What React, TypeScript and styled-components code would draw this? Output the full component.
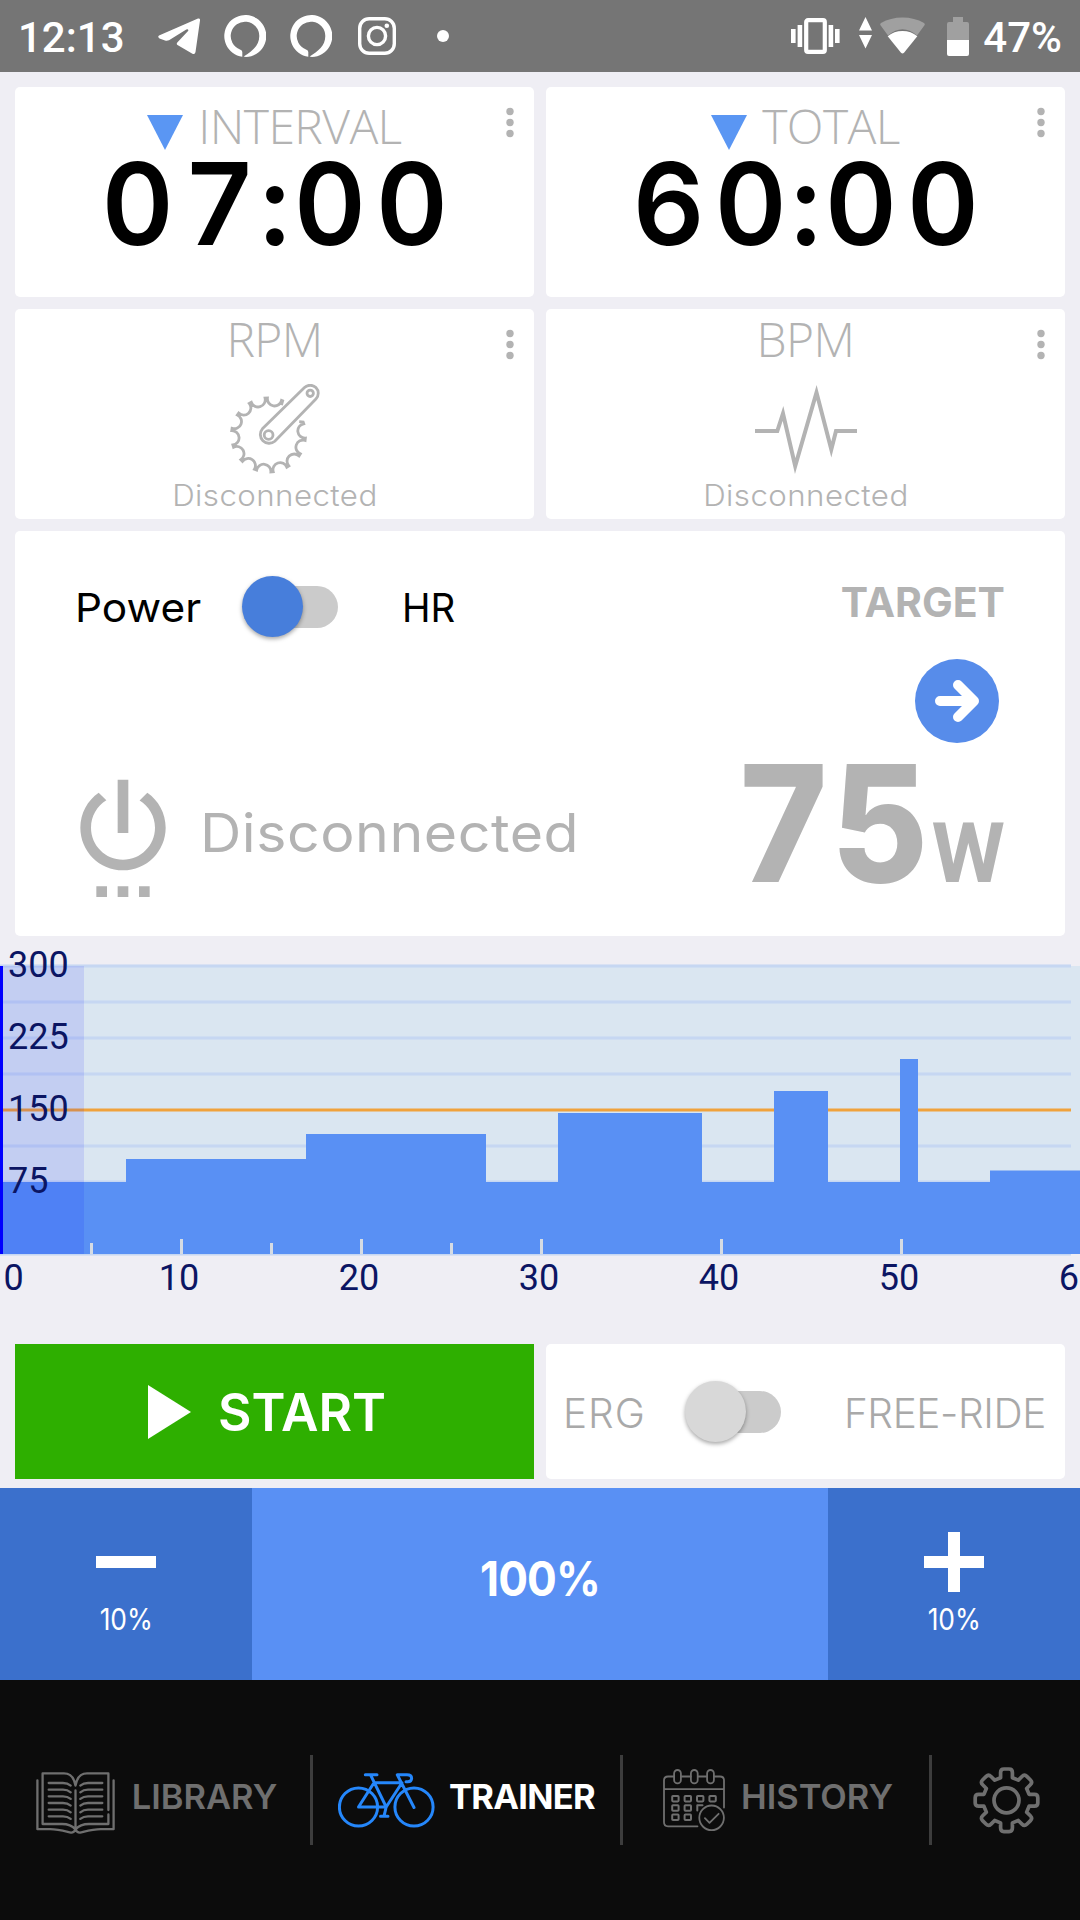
import React from 'react';
import styled, { createGlobalStyle } from 'styled-components';

const c = {
  page: '#efeef4',
  muted: '#b3b3b3',
  blue: '#5990f4',
  deepBlue: '#3b70cc',
  green: '#2eaf00',
  navBg: '#0c0c0c',
  navMuted: '#6f6f6f',
  navActive: '#2587fb',
  axis: '#0b1563',
};

const GlobalStyle = createGlobalStyle`
  * { box-sizing: border-box; }
  body {
    margin: 0;
    background: ${c.navBg};
    font-family: Inter, "Liberation Sans", sans-serif;
  }
  button { font: inherit; border: 0; padding: 0; margin: 0; }
  svg { display: block; flex: none; }
`;

const Screen = styled.div`
  width: 1080px;
  height: 1920px;
  overflow: hidden;
  display: flex;
  flex-direction: column;
  background: ${c.page};
`;

/* ---------- Status bar ---------- */

const StatusBar = styled.header`
  height: 72px;
  display: flex;
  align-items: center;
  padding: 0 18px 0 18px;
  background: #757575;
  color: #fff;
  font: 500 42px/69px Roboto, sans-serif;
`;

const Clock = styled.span`
  width: 140px;
  padding-top: 3px;
`;

const Notifications = styled.div`
  flex: 1;
  display: flex;
  align-items: center;
  gap: 24px;
`;

const MoreDot = styled.span`
  width: 12px;
  height: 12px;
  margin-left: 17px;
  border-radius: 50%;
  background: #fff;
`;

const SystemIcons = styled.div`
  display: flex;
  align-items: center;
`;

const BatteryText = styled.span`
  padding-top: 3px;
  margin-left: 14px;
`;

/* ---------- Metric cards ---------- */

const CardGrid = styled.section`
  display: grid;
  grid-template-columns: 1fr 1fr;
  grid-auto-rows: 210px;
  gap: 12px;
  padding: 15px 15px 12px;
`;

const Card = styled.article`
  position: relative;
  display: flex;
  flex-direction: column;
  align-items: center;
  border-radius: 5px;
  background: #fff;
  color: ${c.muted};
`;

const CardHeader = styled.div<{ $height: number }>`
  display: flex;
  align-items: center;
  gap: 15px;
  height: ${(p) => p.$height}px;
`;

const CardTitle = styled.h2`
  margin: 0;
  padding-top: 1px;
  font: 350 48px/56px "Open Sans", sans-serif;
  letter-spacing: -0.6px;
`;

const Countdown = styled.svg`
  margin-top: 15px;
`;

const MenuButton = styled.button`
  position: absolute;
  top: 20px;
  right: 20px;
  background: none;
`;

const Time = styled.div`
  padding-left: 11px;
  color: #000;
  font-size: 114px;
  font-weight: 630;
  line-height: 82px;
  letter-spacing: 10px;
  font-variant-numeric: tabular-nums;
  white-space: nowrap;
  transform: scaleX(0.98);
`;

const Colon = styled.span`
  margin-left: -6px;
  letter-spacing: 4px;
`;

const SensorIcon = styled.div`
  height: 90px;
  margin-top: 17px;
`;

const SensorStatus = styled.p`
  margin: 0;
  font-size: 29.5px;
  font-weight: 300;
  line-height: 43px;
  letter-spacing: 0.4px;
  transform: scaleX(1.06);
`;

/* ---------- Power panel ---------- */

const PowerPanel = styled.section`
  display: flex;
  justify-content: space-between;
  height: 405px;
  margin: 0 15px;
  border-radius: 5px;
  background: #fff;
  color: ${c.muted};
`;

const PowerColumn = styled.div`
  padding: 45px 0 0 44px;
`;

const ModeRow = styled.div`
  display: flex;
  align-items: center;
  height: 61px;
  padding-left: 16px;
`;

const ModeLabel = styled.span<{ $width: number; $stretch: number }>`
  width: ${(p) => p.$width}px;
  padding-top: 3px;
  color: #000;
  font-size: 40px;
  line-height: 58px;
  transform: scaleX(${(p) => p.$stretch});
  transform-origin: left;
`;

const Track = styled.button<{ $before: number; $after: number }>`
  flex: none;
  width: 86px;
  height: 42px;
  display: flex;
  align-items: center;
  margin: 0 ${(p) => p.$after}px 0 ${(p) => p.$before + 10}px;
  border-radius: 21px;
  background: #cbcbcb;
`;

const Thumb = styled.span<{ $color: string }>`
  flex: none;
  width: 61px;
  height: 61px;
  margin-left: -10px;
  border-radius: 50%;
  background: ${(p) => p.$color};
  box-shadow: 0 2px 4px rgba(0, 0, 0, 0.35);
`;

const ConnectionRow = styled.div`
  display: flex;
  align-items: center;
  gap: 13px;
  margin-top: 132px;
`;

const ConnectionText = styled.span`
  margin-top: -1px;
  font-size: 53px;
  font-weight: 370;
  line-height: 64px;
  letter-spacing: 0.5px;
  transform: scaleX(1.08);
  transform-origin: left;
`;

const TargetColumn = styled.div`
  display: flex;
  flex-direction: column;
  align-items: flex-end;
  padding: 41px 60px 0 0;
`;

const TargetTitle = styled.h2`
  margin: 0;
  font-size: 41px;
  font-weight: 700;
  line-height: 60px;
`;

const NextButton = styled.button`
  width: 84px;
  height: 84px;
  margin: 27px 6px 21px 0;
  border-radius: 50%;
  background: #578cea;
`;

const TargetValue = styled.div`
  display: flex;
  align-items: baseline;
  height: 118px;
`;

const Watts = styled.span`
  margin-right: -2px;
  font-size: 162px;
  font-weight: 850;
  line-height: 118px;
  letter-spacing: 5.5px;
  transform: scaleX(0.92);
  transform-origin: right;
`;

const Unit = styled.span`
  font: 700 84px/60px Roboto, sans-serif;
`;

/* ---------- Workout chart ---------- */

const ChartArea = styled.section`
  height: 408px;
`;

const AxisText = styled.text`
  fill: ${c.axis};
  font: 400 36px Roboto, sans-serif;
`;

/* ---------- Controls ---------- */

const Controls = styled.section`
  display: grid;
  grid-template-columns: 1fr 1fr;
  gap: 12px;
  height: 135px;
  margin: 0 15px 9px;
`;

const StartButton = styled.button`
  display: flex;
  align-items: center;
  justify-content: center;
  gap: 27px;
  padding-right: 15px;
  background: ${c.green};
  color: #fff;
  font-size: 51.5px;
  font-weight: 640;
`;

const StartLabel = styled.span`
  padding-top: 1px;
`;

const RideMode = styled.div`
  display: flex;
  align-items: center;
  padding-left: 17px;
  border-radius: 5px;
  background: #fff;
`;

const RideLabel = styled.span<{ $spacing: number }>`
  padding-top: 4px;
  color: #a9a9a9;
  font-size: 40.5px;
  font-weight: 350;
  letter-spacing: ${(p) => p.$spacing}px;
  white-space: nowrap;
`;

/* ---------- Intensity bar ---------- */

const IntensityBar = styled.section`
  display: grid;
  grid-template-columns: 252px 1fr 252px;
  height: 192px;
  background: ${c.blue};
  color: #fff;
`;

const StepButton = styled.button`
  display: flex;
  flex-direction: column;
  align-items: center;
  padding-top: 44px;
  background: ${c.deepBlue};
  color: #fff;
  font-size: 30px;
  line-height: 54px;
`;

const StepLabel = styled.span`
  transform: scaleX(0.88);
`;

const Intensity = styled.div`
  display: flex;
  align-items: center;
  justify-content: center;
  padding-bottom: 11px;
  font-size: 48px;
  font-weight: 650;
  letter-spacing: -1px;
  transform: scaleX(0.92);
`;

/* ---------- Bottom navigation ---------- */

const NavBar = styled.nav`
  display: grid;
  grid-template-columns: 310px 3px 307px 3px 306px 3px 1fr;
  height: 240px;
  padding-top: 75px;
  background: ${c.navBg};
`;

const NavItem = styled.a<{ $active?: boolean; $gap?: number; $shift?: number }>`
  display: flex;
  align-items: center;
  justify-content: center;
  gap: ${(p) => p.$gap ?? 0}px;
  height: 90px;
  padding-left: ${(p) => p.$shift ?? 0}px;
  color: ${(p) => (p.$active ? '#fff' : c.navMuted)};
  font-size: 34.5px;
  font-weight: ${(p) => (p.$active ? 650 : 600)};
`;

const NavLabel = styled.span<{ $spacing?: number }>`
  margin-top: -7px;
  letter-spacing: ${(p) => p.$spacing ?? 0}px;
`;

const NavDivider = styled.span`
  height: 90px;
  background: #3d3d3d;
`;

/* ---------- Icons ---------- */

const TelegramIcon = () => (
  <svg width="42" height="37" viewBox="0 0 42 37" fill="#fff">
    <path d="M1 17.5 40 .6Q42.3 0 42 2.5L37.5 34Q37 37 34 35.5L19.5 27Q18 26 19.5 24.3L30.3 12.7Q30.5 10.8 28.3 11.5L11 22.3Q9 23 7 22.5L1.5 20.5Q-.8 19 1 17.5Z" />
  </svg>
);

const AssistantIcon = () => (
  <svg width="42" height="42" viewBox="0 0 42 42" fill="#fff">
    <path d="M18.3 41.8A21 21 0 1 1 22 42L19.6 41.6C28 36 35.3 31 35.3 21A14.3 14.3 0 1 0 16 34.4Q18.3 35 18.3 37Z" />
  </svg>
);

const InstagramMark = styled.svg`
  margin-left: 2px;
`;

const InstagramIcon = () => (
  <InstagramMark width="38" height="38" viewBox="0 0 38 38" fill="none" stroke="#fff" strokeWidth="3.4">
    <rect x="1.7" y="1.7" width="34.6" height="34.6" rx="9.5" />
    <circle cx="19" cy="19" r="8.6" />
    <circle cx="28.8" cy="8.8" r="2.3" fill="#fff" stroke="none" />
  </InstagramMark>
);

const VibrateIcon = () => (
  <svg width="49" height="36" viewBox="0 0 49 36" fill="#fff">
    <rect x="15.2" y="2.2" width="18.6" height="31.6" rx="1.8" fill="none" stroke="#fff" strokeWidth="4.2" />
    <path d="M0 11h4.6v14H0zM6.6 7h4.6v22H6.6zM37.6 7h4.6v22h-4.6zM44 11h4.6v14H44z" />
  </svg>
);

const TransferIcon = styled.svg`
  margin: -7px 8px 0 19px;
`;

const BatteryIcon = styled.svg`
  margin-left: 22px;
`;

const StatusIcons = () => (
  <SystemIcons>
    <VibrateIcon />
    <TransferIcon width="13" height="32" viewBox="0 0 13 32" fill="#fff">
      <path d="M6.5 0 13 13.5H0zM0 18h13L6.5 31.5z" />
    </TransferIcon>
    <svg width="45" height="38" viewBox="0 0 45 38">
      <path d="M.5 8.3Q-.3 7 1 6Q10.5 .5 22.5 .5T44 6Q45.3 7 44.5 8.3L37 18.5Q22.5 6 8 18.5Z" fill="#a0a0a0" />
      <path d="M7.7 19.2Q14 14 22.5 14T37.3 19.2L24 35.7Q22.5 37.3 21 35.7Z" fill="#fff" />
    </svg>
    <BatteryIcon width="22" height="39" viewBox="0 0 22 39">
      <path d="M6 0h10v5h4q2 0 2 2v16H0V7q0-2 2-2h4z" fill="#a0a0a0" />
      <path d="M0 23h22v14q0 2-2 2H2q-2 0-2-2z" fill="#fff" />
    </BatteryIcon>
  </SystemIcons>
);

const MenuDots = () => (
  <svg width="8" height="31" viewBox="0 0 8 31" fill={c.muted}>
    {[4.5, 15.5, 26.5].map((y) => (
      <circle key={y} cx="4" cy={y} r="3.7" />
    ))}
  </svg>
);

const polar = (r: number, deg: number) => {
  const a = (deg * Math.PI) / 180;
  return `${(38.5 + r * Math.cos(a)).toFixed(2)} ${(51 + r * Math.sin(a)).toFixed(2)}`;
};

const ringTeeth = Array.from({ length: 13 }, (_, k) => -19.5 + k * 26);
const ringPath = ringTeeth
  .map((deg, i) =>
    i === 0
      ? `M${polar(33.5, deg - 4)}L${polar(37, deg - 1)}L${polar(37, deg + 1.8)}`
      : `A7.2 7.2 0 0 0 ${polar(37, deg - 1.8)}L${i === 12 ? `${polar(37, deg)}L${polar(32.5, deg + 1)}` : polar(37, deg + 1.8)}`,
  )
  .join('');

const CrankIcon = () => (
  <svg width="90" height="90" viewBox="0 0 90 90" fill="none" stroke={c.muted} strokeWidth="2.8">
    <path d={ringPath} />
    <path d="M32.4 44.8 74.5 3.6A8 8 0 0 1 85.9 15L44.8 57.2A8.8 8.8 0 0 1 32.4 44.8Z" fill="#fff" />
    <circle cx="38.6" cy="51" r="4.4" />
    <circle cx="80.2" cy="9.3" r="3.2" />
  </svg>
);

const PulseIcon = () => (
  <svg width="102" height="90" viewBox="0 0 102 90" fill="none" stroke={c.muted} strokeWidth="4" strokeMiterlimit="20">
    <path d="M0 47H22.3L28 29.5 40.2 82 61.5 8.5 76.3 65.5 81 47H102" />
  </svg>
);

const PowerIcon = () => (
  <svg width="128" height="128" viewBox="0 0 24 24" fill={c.muted}>
    <path d="M7 24h2v-2H7v2zm4 0h2v-2h-2v2zm2-22h-2v10h2V2zm3.56 2.44l-1.45 1.45C16.84 6.94 18 8.83 18 11c0 3.31-2.69 6-6 6s-6-2.69-6-6c0-2.17 1.16-4.06 2.88-5.12L7.44 4.44C5.36 5.88 4 8.28 4 11c0 4.42 3.58 8 8 8s8-3.58 8-8c0-2.72-1.36-5.12-3.44-6.56zM15 24h2v-2h-2v2z" />
  </svg>
);

const lineRows = [11, 17.7, 24.3, 31, 37.7, 44.3];

const BookSvg = styled.svg`
  margin-top: 5px;
`;

const LibraryIcon = () => (
  <BookSvg width="79" height="62" viewBox="0 0 79 62" fill="none" stroke={c.navMuted} strokeWidth="2.3" strokeLinecap="round" strokeLinejoin="round">
    <path d="M1.4 8.3V57.2H14C23 57.2 30 59.5 35 60.6Q38 60.8 39.5 57.5Q41 60.8 44 60.6C49 59.5 56 57.2 65 57.2H77.6V8.3" />
    <path d="M39.5 13.5C38 5 34 1.4 28 1.4H6.6V52H26C33 52 36.5 54 39.5 57.5C42.5 54 46 52 53 52H72.4V42.5M39.5 13.5C41 5 45 1.4 51 1.4H72.4V38M39.5 18.5V57" />
    {lineRows.map((y) => (
      <path key={y} d={`M12.7 ${y}H27Q31.5 ${y} 34.7 ${y + 2.6}M66.3 ${y}H52Q47.5 ${y} 44.3 ${y + 2.6}`} />
    ))}
  </BookSvg>
);

const BikeIcon = () => (
  <svg width="97" height="55" viewBox="0 0 97 55" fill="none" stroke={c.navActive} strokeWidth="3" strokeLinecap="round" strokeLinejoin="round">
    <circle cx="20.5" cy="34" r="19.1" />
    <circle cx="76" cy="34" r="19.1" />
    <path d="M27.3 1.8H39M32.6 2L48.2 34H20.5L36 9.7H64L48.2 34L46 43.2M42.5 43.2H50M76 34.5L59.3 1.8H69Q73.6 1.8 73.6 5.3T69.8 8.8H68" />
  </svg>
);

const dayCells = [
  [12.4, 29.7], [24.8, 29.7], [37.2, 29.7], [49.6, 29.7],
  [12.4, 39], [24.8, 39], [12.4, 48.3], [24.8, 48.3],
];

const CalendarSvg = styled.svg`
  margin-top: 2px;
`;

const CalendarIcon = () => (
  <CalendarSvg width="62" height="64" viewBox="0 0 62 64" fill="none" stroke={c.navMuted} strokeWidth="1.8" strokeLinecap="round" strokeLinejoin="round">
    <path d="M11 7.5H5Q1 7.5 1 11.5V53.3Q1 57.3 5 57.3H34.5M18 7.5H27.8M34.8 7.5H44M51 7.5H57Q61 7.5 61 11.5V38.5M1 20.2H61" />
    {[14.5, 31.3, 47.5].map((x) => (
      <rect key={x} x={x - 3.4} y="1" width="6.8" height="13.3" rx="3.4" />
    ))}
    {dayCells.map(([x, y]) => (
      <rect key={`${x}-${y}`} x={x - 3.2} y={y - 2.7} width="6.4" height="5.4" rx="0.8" strokeWidth="2" />
    ))}
    <path d="M39.5 36.3H34.3V41.5" strokeWidth="2" />
    <circle cx="48.6" cy="48.8" r="12.3" />
    <path d="M41.9 49.2 46.5 53.8 55.6 44.8" />
  </CalendarSvg>
);

const rotate = (x: number, y: number, k: number) => {
  const a = (k * Math.PI) / 4;
  return `${(33.5 + x * Math.cos(a) - y * Math.sin(a)).toFixed(2)} ${(33.3 + x * Math.sin(a) + y * Math.cos(a)).toFixed(2)}`;
};

const gearPath =
  Array.from({ length: 8 }, (_, k) => {
    const p = (x: number, y: number) => rotate(x, y, k);
    return `${k ? 'L' : 'M'}${p(-5.9, -22.6)}L${p(-5.9, -27.8)}Q${p(-5.9, -31.3)} ${p(-2.6, -31.3)}L${p(2.6, -31.3)}Q${p(5.9, -31.3)} ${p(5.9, -27.8)}L${p(5.9, -22.6)}`;
  }).join('') + 'Z';

const GearIcon = () => (
  <svg width="67" height="67" viewBox="0 0 67 67" fill="none" stroke={c.navMuted} strokeWidth="3.7" strokeLinejoin="round">
    <path d={gearPath} />
    <circle cx="33.5" cy="33.3" r="12.5" />
  </svg>
);

/* ---------- Chart data ---------- */

const MINUTE = 18;
const BASE = 318;
const segments = [
  { from: 0, to: 7, height: 72 },
  { from: 7, to: 17, height: 95 },
  { from: 17, to: 27, height: 120 },
  { from: 27, to: 31, height: 72 },
  { from: 31, to: 39, height: 141 },
  { from: 39, to: 43, height: 72 },
  { from: 43, to: 46, height: 163 },
  { from: 46, to: 50, height: 72 },
  { from: 50, to: 51, height: 195 },
  { from: 51, to: 55, height: 72 },
  { from: 55, to: 60, height: 83.5 },
];
const gridRows = [0, 36, 72, 108, 180, 216, 288];
const yLabels = [300, 225, 150, 75];
const xLabels = [0, 10, 20, 30, 40, 50, 60];

const WorkoutChart = () => (
  <ChartArea>
    <svg width="1080" height="372" viewBox="0 0 1080 372">
      <rect x="0" y="30" width="1080" height="288" fill="#dae6f1" />
      {gridRows.map((y) => (
        <g key={y} fill="#c6d7f2">
          <rect x="0" y={28 + y} width="1071" height="4" opacity="0.55" />
          <rect x="0" y={29 + y} width="1071" height="2" />
        </g>
      ))}
      <rect x="0" y="172" width="1071" height="4" fill="#f0a23c" opacity="0.5" />
      <rect x="0" y="173" width="1071" height="2" fill="#f0a23c" />
      {segments.map((s) => (
        <rect
          key={s.from}
          x={s.from * MINUTE}
          y={BASE - s.height}
          width={(s.to - s.from) * MINUTE}
          height={s.height}
          fill={c.blue}
        />
      ))}
      {[5, 15, 25].map((m) => (
        <rect key={m} x={m * MINUTE} y="307" width="3" height="11" fill="#d5dbe3" />
      ))}
      {[10, 20, 30, 40, 50].map((m) => (
        <rect key={m} x={m * MINUTE} y="303" width="3" height="15" fill="#d5dbe3" />
      ))}
      <rect x="3" y="30" width="81" height="288" fill="#0000ff" opacity="0.1" />
      <rect x="0" y="30" width="3" height="288" fill="#0000ff" />
      {yLabels.map((v, i) => (
        <AxisText key={v} x="8" y={41 + i * 72}>
          {v}
        </AxisText>
      ))}
      {xLabels.map((v) => (
        <AxisText key={v} x={v === 0 ? 3.5 : v * MINUTE - 21.3} y="354">
          {v}
        </AxisText>
      ))}
    </svg>
  </ChartArea>
);

/* ---------- Composed parts ---------- */

const TimerCard = ({ title, minutes, seconds }: { title: string; minutes: string; seconds: string }) => (
  <Card>
    <CardHeader $height={76}>
      <Countdown width="36" height="35" viewBox="0 0 36 35">
        <path d="M0 0H36L18 35Z" fill="#5a96f3" />
      </Countdown>
      <CardTitle>{title}</CardTitle>
    </CardHeader>
    <Time>
      {minutes}
      <Colon>:</Colon>
      {seconds}
    </Time>
    <MenuButton aria-label="More">
      <MenuDots />
    </MenuButton>
  </Card>
);

const SensorCard = ({ title, icon }: { title: string; icon: React.ReactNode }) => (
  <Card>
    <CardHeader $height={58}>
      <CardTitle>{title}</CardTitle>
    </CardHeader>
    <SensorIcon>{icon}</SensorIcon>
    <SensorStatus>Disconnected</SensorStatus>
    <MenuButton aria-label="More">
      <MenuDots />
    </MenuButton>
  </Card>
);

export default function App() {
  return (
    <>
      <GlobalStyle />
      <Screen>
        <StatusBar>
          <Clock>12:13</Clock>
          <Notifications>
            <TelegramIcon />
            <AssistantIcon />
            <AssistantIcon />
            <InstagramIcon />
            <MoreDot />
          </Notifications>
          <StatusIcons />
          <BatteryText>47%</BatteryText>
        </StatusBar>

        <CardGrid>
          <TimerCard title="INTERVAL" minutes="07" seconds="00" />
          <TimerCard title="TOTAL" minutes="60" seconds="00" />
          <SensorCard title="RPM" icon={<CrankIcon />} />
          <SensorCard title="BPM" icon={<PulseIcon />} />
        </CardGrid>

        <PowerPanel>
          <PowerColumn>
            <ModeRow>
              <ModeLabel $width={129} $stretch={1.06}>Power</ModeLabel>
              <Track $before={38} $after={64} aria-label="Power or HR">
                <Thumb $color="#477edb" />
              </Track>
              <ModeLabel $width={56} $stretch={0.96}>HR</ModeLabel>
            </ModeRow>
            <ConnectionRow>
              <PowerIcon />
              <ConnectionText>Disconnected</ConnectionText>
            </ConnectionRow>
          </PowerColumn>
          <TargetColumn>
            <TargetTitle>TARGET</TargetTitle>
            <NextButton aria-label="Next">
              <svg width="84" height="84" viewBox="0 0 84 84" fill="none" stroke="#fff" strokeWidth="10" strokeLinecap="round" strokeLinejoin="round">
                <path d="M25 42H58M43 26 59 42 43 58" />
              </svg>
            </NextButton>
            <TargetValue>
              <Watts>75</Watts>
              <Unit>W</Unit>
            </TargetValue>
          </TargetColumn>
        </PowerPanel>

        <WorkoutChart />

        <Controls>
          <StartButton>
            <svg width="43" height="54" viewBox="0 0 43 54" fill="#fff">
              <path d="M0 0 43 27 0 54Z" />
            </svg>
            <StartLabel>START</StartLabel>
          </StartButton>
          <RideMode>
            <RideLabel $spacing={1}>ERG</RideLabel>
            <Track $before={39} $after={63} aria-label="Erg or free-ride">
              <Thumb $color="#d8d8d8" />
            </Track>
            <RideLabel $spacing={-0.4}>FREE-RIDE</RideLabel>
          </RideMode>
        </Controls>

        <IntensityBar>
          <StepButton>
            <svg width="60" height="60" viewBox="0 0 60 60" fill="#fff">
              <path d="M0 24H60V36H0Z" />
            </svg>
            <StepLabel>10%</StepLabel>
          </StepButton>
          <Intensity>100%</Intensity>
          <StepButton>
            <svg width="60" height="60" viewBox="0 0 60 60" fill="#fff">
              <path d="M0 24H24V0H36V24H60V36H36V60H24V36H0Z" />
            </svg>
            <StepLabel>10%</StepLabel>
          </StepButton>
        </IntensityBar>

        <NavBar>
          <NavItem $gap={17} $shift={3}>
            <LibraryIcon />
            <NavLabel>LIBRARY</NavLabel>
          </NavItem>
          <NavDivider />
          <NavItem $active $gap={14}>
            <BikeIcon />
            <NavLabel $spacing={-0.7}>TRAINER</NavLabel>
          </NavItem>
          <NavDivider />
          <NavItem $gap={16} $shift={4}>
            <CalendarIcon />
            <NavLabel>HISTORY</NavLabel>
          </NavItem>
          <NavDivider />
          <NavItem aria-label="Settings">
            <GearIcon />
          </NavItem>
        </NavBar>
      </Screen>
    </>
  );
}
